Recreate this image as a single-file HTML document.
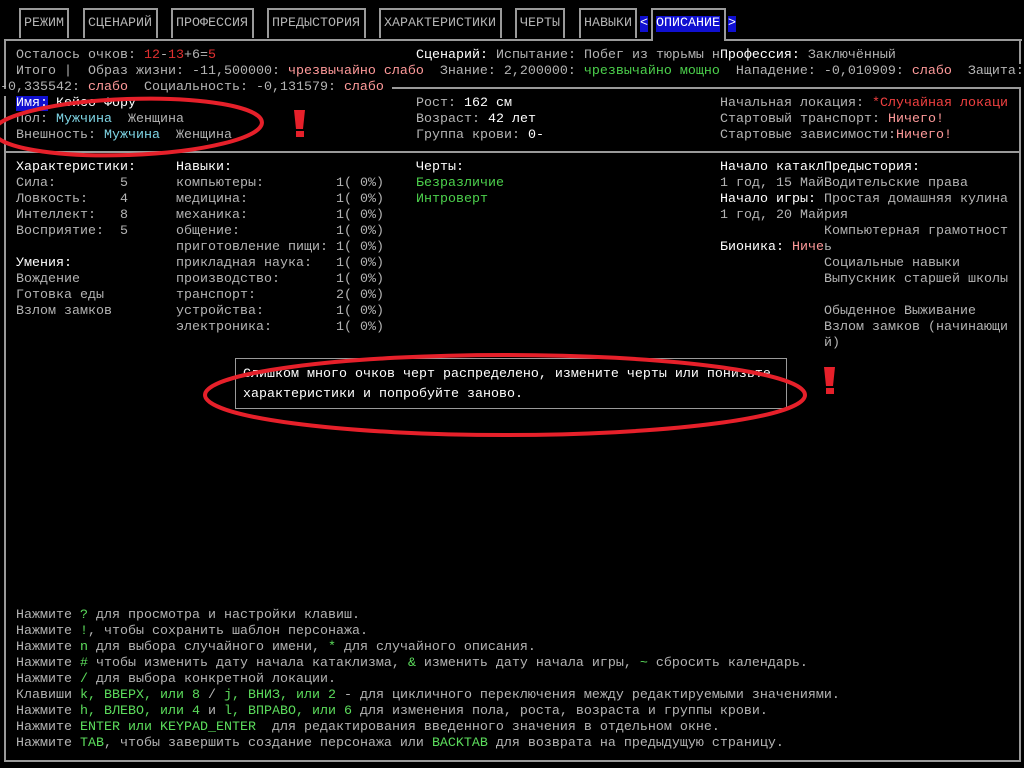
<!DOCTYPE html>
<html><head><meta charset="utf-8"><style>
html,body{margin:0;padding:0;background:#000;width:1024px;height:768px;overflow:hidden}
body{position:relative;font-family:"Liberation Mono","DejaVu Sans Mono",monospace;font-size:13.33px;color:#b4b4b4}
.l{position:absolute;white-space:pre;line-height:16px;height:16px}
.w{color:#fff}.r{color:#ff9a9a}.R{color:#e03030}.g{color:#4cd04c}.c{color:#7fd6e6}.G{color:#5cdc5c}
.hl{background:#1010d0;color:#fff}
.tab{position:absolute;top:8px;height:30px;border:2px solid #9a9a9a;border-bottom:none;box-sizing:border-box}
.tt{position:absolute;top:16px;white-space:pre;line-height:16px}
.h{position:absolute;height:2px;background:#9a9a9a}
.v{position:absolute;width:2px;background:#9a9a9a}
</style></head><body>
<div class="tab" style="left:19px;width:50px"></div><div class="tt" style="left:24px">РЕЖИМ</div>
<div class="tab" style="left:83px;width:75px"></div><div class="tt" style="left:88px">СЦЕНАРИЙ</div>
<div class="tab" style="left:171px;width:83px"></div><div class="tt" style="left:176px">ПРОФЕССИЯ</div>
<div class="tab" style="left:267px;width:99px"></div><div class="tt" style="left:272px">ПРЕДЫСТОРИЯ</div>
<div class="tab" style="left:379px;width:123px"></div><div class="tt" style="left:384px">ХАРАКТЕРИСТИКИ</div>
<div class="tab" style="left:515px;width:50px"></div><div class="tt" style="left:520px">ЧЕРТЫ</div>
<div class="tab" style="left:579px;width:58px"></div><div class="tt" style="left:584px">НАВЫКИ</div>
<div class="tab" style="left:651px;width:75px;height:33px"></div>
<div class="tt hl" style="left:640px">&lt;</div><div class="tt hl" style="left:656px">ОПИСАНИЕ</div><div class="tt hl" style="left:728px">&gt;</div>
<div class="h" style="left:4px;top:39px;width:648px"></div>
<div class="h" style="left:725px;top:39px;width:297px"></div>
<div class="v" style="left:4px;top:39px;height:50px"></div>
<div class="v" style="left:4px;top:96px;height:666px"></div>
<div class="v" style="left:1019px;top:39px;height:25px"></div>
<div class="v" style="left:1019px;top:88px;height:674px"></div>
<div class="h" style="left:392px;top:87px;width:629px"></div>
<div class="h" style="left:4px;top:151px;width:1017px"></div>
<div class="h" style="left:4px;top:760px;width:1017px"></div>

<div class="l" style="left:16px;top:48px">Осталось очков: <span class="R">12</span>-<span class="R">13</span>+6=<span class="R">5</span></div>
<div class="l" style="left:416px;top:48px"><span class="w">Сценарий:</span> Испытание: Побег из тюрьмы н<span class="w">Профессия:</span> Заключённый</div>
<div class="l" style="left:16px;top:64px">Итого |  Образ жизни: -11,500000: <span class="r">чрезвычайно слабо</span>  Знание: 2,200000: <span class="g">чрезвычайно мощно</span>  Нападение: -0,010909: <span class="r">слабо</span>  Защита:</div>
<div class="l" style="left:0px;top:80px">-0,335542: <span class="r">слабо</span>  Социальность: -0,131579: <span class="r">слабо</span></div>

<div class="l" style="left:16px;top:96px"><span class="hl">Имя:</span> <span class="w">Кейсо Фору</span></div>
<div class="l" style="left:16px;top:112px">Пол: <span class="c">Мужчина</span>  Женщина</div>
<div class="l" style="left:16px;top:128px">Внешность: <span class="c">Мужчина</span>  Женщина</div>
<div class="l" style="left:416px;top:96px">Рост: <span class="w">162 см</span></div>
<div class="l" style="left:416px;top:112px">Возраст: <span class="w">42 лет</span></div>
<div class="l" style="left:416px;top:128px">Группа крови: <span class="w">0-</span></div>
<div class="l" style="left:720px;top:96px">Начальная локация: <span style="color:#f04040">*Случайная локаци</span></div>
<div class="l" style="left:720px;top:112px">Стартовый транспорт: <span class="r">Ничего!</span></div>
<div class="l" style="left:720px;top:128px">Стартовые зависимости:<span class="r">Ничего!</span></div>

<div class="l w" style="left:16px;top:160px">Характеристики:</div>
<div class="l" style="left:16px;top:176px">Сила:        5</div>
<div class="l" style="left:16px;top:192px">Ловкость:    4</div>
<div class="l" style="left:16px;top:208px">Интеллект:   8</div>
<div class="l" style="left:16px;top:224px">Восприятие:  5</div>
<div class="l w" style="left:16px;top:256px">Умения:</div>
<div class="l" style="left:16px;top:272px">Вождение</div>
<div class="l" style="left:16px;top:288px">Готовка еды</div>
<div class="l" style="left:16px;top:304px">Взлом замков</div>

<div class="l w" style="left:176px;top:160px">Навыки:</div>
<div class="l" style="left:176px;top:176px">компьютеры:         1( 0%)
медицина:           1( 0%)
механика:           1( 0%)
общение:            1( 0%)
приготовление пищи: 1( 0%)
прикладная наука:   1( 0%)
производство:       1( 0%)
транспорт:          2( 0%)
устройства:         1( 0%)
электроника:        1( 0%)</div>

<div class="l w" style="left:416px;top:160px">Черты:</div>
<div class="l g" style="left:416px;top:176px">Безразличие</div>
<div class="l g" style="left:416px;top:192px">Интроверт</div>

<div class="l w" style="left:720px;top:160px">Начало катаклПредыстория:</div>
<div class="l" style="left:720px;top:176px">1 год, 15 МайВодительские права</div>
<div class="l" style="left:720px;top:192px"><span class="w">Начало игры:</span> Простая домашняя кулина</div>
<div class="l" style="left:720px;top:208px">1 год, 20 Майрия</div>
<div class="l" style="left:824px;top:224px">Компьютерная грамотност</div>
<div class="l" style="left:720px;top:240px"><span class="w">Бионика:</span> <span class="r">Ниче</span>ь</div>
<div class="l" style="left:824px;top:256px">Социальные навыки</div>
<div class="l" style="left:824px;top:272px">Выпускник старшей школы</div>
<div class="l" style="left:824px;top:304px">Обыденное Выживание</div>
<div class="l" style="left:824px;top:320px">Взлом замков (начинающи</div>
<div class="l" style="left:824px;top:336px">й)</div>

<div style="position:absolute;left:235px;top:358px;width:552px;height:51px;border:1px solid #9a9a9a;box-sizing:border-box;background:#000"></div>
<div class="l w" style="left:243px;top:367px">Слишком много очков черт распределено, измените черты или понизьте</div>
<div class="l w" style="left:243px;top:387px">характеристики и попробуйте заново.</div>

<div class="l" style="left:16px;top:608px">Нажмите <span class="G">?</span> для просмотра и настройки клавиш.</div>
<div class="l" style="left:16px;top:624px">Нажмите <span class="G">!</span>, чтобы сохранить шаблон персонажа.</div>
<div class="l" style="left:16px;top:640px">Нажмите <span class="G">n</span> для выбора случайного имени, <span class="G">*</span> для случайного описания.</div>
<div class="l" style="left:16px;top:656px">Нажмите <span class="G">#</span> чтобы изменить дату начала катаклизма, <span class="G">&amp;</span> изменить дату начала игры, <span class="G">~</span> сбросить календарь.</div>
<div class="l" style="left:16px;top:672px">Нажмите <span class="G">/</span> для выбора конкретной локации.</div>
<div class="l" style="left:16px;top:688px">Клавиши <span class="G">k, ВВЕРХ, или 8</span> / <span class="G">j, ВНИЗ, или 2</span> - для цикличного переключения между редактируемыми значениями.</div>
<div class="l" style="left:16px;top:704px">Нажмите <span class="G">h, ВЛЕВО, или 4</span> и <span class="G">l, ВПРАВО, или 6</span> для изменения пола, роста, возраста и группы крови.</div>
<div class="l" style="left:16px;top:720px">Нажмите <span class="G">ENTER или KEYPAD_ENTER</span>  для редактирования введенного значения в отдельном окне.</div>
<div class="l" style="left:16px;top:736px">Нажмите <span class="G">TAB</span>, чтобы завершить создание персонажа или <span class="G">BACKTAB</span> для возврата на предыдущую страницу.</div>

<svg style="position:absolute;left:0;top:0" width="1024" height="768">
<ellipse cx="128" cy="127" rx="134" ry="28" fill="none" stroke="#e6202a" stroke-width="4" transform="rotate(-2 128 127)"/>
<ellipse cx="505" cy="395" rx="300" ry="40" fill="none" stroke="#e6202a" stroke-width="4"/>
<path d="M294 110h11l-2 19h-7z" fill="#e6202a"/><rect x="296" y="131" width="8" height="6" fill="#e6202a"/>
<path d="M824 367h11l-2 19h-7z" fill="#e6202a"/><rect x="826" y="388" width="8" height="6" fill="#e6202a"/>
</svg>
</body></html>
